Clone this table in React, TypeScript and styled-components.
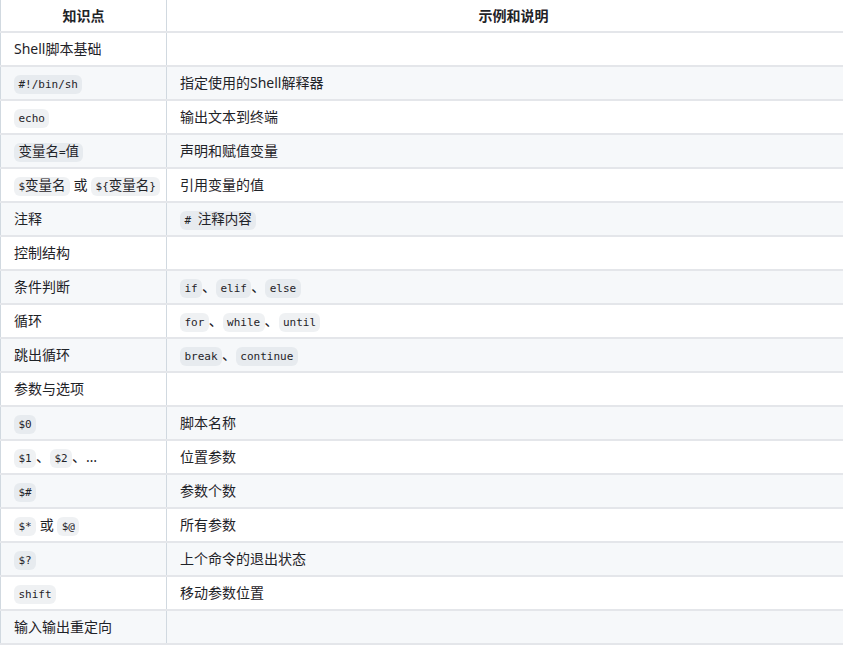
import React from "react";
import styled, { createGlobalStyle } from "styled-components";

const Global = createGlobalStyle`
  html, body { margin: 0; padding: 0; background: #ffffff; }
  body { overflow: hidden; }
`;

const Wrapper = styled.div`
  width: 843px;
  height: 645px;
  overflow: hidden;
  font-family: "Noto Sans", "Noto Sans CJK SC", sans-serif;
  font-size: 14px;
  color: #1f2328;
`;

const Table = styled.table`
  border-collapse: collapse;
  width: 860px;
  table-layout: fixed;
`;

const Row = styled.tr<{ $striped?: boolean }>`
  background: ${(p) => (p.$striped ? "#f6f8fa" : "#ffffff")};
`;

const HeadCell = styled.th<{ $first?: boolean }>`
  height: 31px;
  padding: 0 13px;
  font-weight: 700;
  text-align: center;
  line-height: 20px;
  border-bottom: 2px solid #e4e6ea;
  border-left: 1px solid #d1d9e0;
  width: ${(p) => (p.$first ? "139px" : "auto")};
`;

const Cell = styled.td`
  height: 32px;
  padding: 0 13px;
  line-height: 20px;
  border-bottom: 2px solid #e4e6ea;
  border-left: 1px solid #d1d9e0;
  white-space: pre;
`;

const Code = styled.code`
  font-family: "DejaVu Sans Mono", "Noto Sans CJK SC", monospace;
  font-size: 11px;
  line-height: 13px;
  padding: 3px 4.4px;
  border-radius: 6px;
  background: rgba(175, 184, 193, 0.2);
`;

const CodeCjk = styled.span`
  font-family: "Noto Sans CJK SC", sans-serif;
  font-size: 13.5px;
`;

const Sep = styled.span`
  margin: 0;
`;

const cjkRe = /([\u3400-\u9fff]+)/;

const CodeText = ({ text }: { text: string }) => (
  <Code>
    {text.split(cjkRe).map((part, i) =>
      cjkRe.test(part) ? <CodeCjk key={i}>{part}</CodeCjk> : part
    )}
  </Code>
);

type Item = { left: React.ReactNode; right: React.ReactNode };

const joined = (parts: string[], sep: string) =>
  parts.map((p, i) => (
    <React.Fragment key={i}>
      {i > 0 && <Sep>{sep}</Sep>}
      <CodeText text={p} />
    </React.Fragment>
  ));

const rows: Item[] = [
  { left: "Shell脚本基础", right: "" },
  { left: <CodeText text="#!/bin/sh" />, right: "指定使用的Shell解释器" },
  { left: <CodeText text="echo" />, right: "输出文本到终端" },
  { left: <CodeText text="变量名=值" />, right: "声明和赋值变量" },
  { left: joined(["$变量名", "${变量名}"], " 或 "), right: "引用变量的值" },
  { left: "注释", right: <CodeText text="# 注释内容" /> },
  { left: "控制结构", right: "" },
  { left: "条件判断", right: joined(["if", "elif", "else"], "、") },
  { left: "循环", right: joined(["for", "while", "until"], "、") },
  { left: "跳出循环", right: joined(["break", "continue"], "、") },
  { left: "参数与选项", right: "" },
  { left: <CodeText text="$0" />, right: "脚本名称" },
  {
    left: (
      <>
        {joined(["$1", "$2"], "、")}
        <Sep>、</Sep>…
      </>
    ),
    right: "位置参数",
  },
  { left: <CodeText text="$#" />, right: "参数个数" },
  { left: joined(["$*", "$@"], " 或 "), right: "所有参数" },
  { left: <CodeText text="$?" />, right: "上个命令的退出状态" },
  { left: <CodeText text="shift" />, right: "移动参数位置" },
  { left: "输入输出重定向", right: "" },
];

export default function App() {
  return (
    <>
      <Global />
      <Wrapper>
        <Table>
          <thead>
            <Row>
              <HeadCell $first>知识点</HeadCell>
              <HeadCell>示例和说明</HeadCell>
            </Row>
          </thead>
          <tbody>
            {rows.map((r, i) => (
              <Row key={i} $striped={i % 2 === 1}>
                <Cell>{r.left}</Cell>
                <Cell>{r.right}</Cell>
              </Row>
            ))}
          </tbody>
        </Table>
      </Wrapper>
    </>
  );
}
